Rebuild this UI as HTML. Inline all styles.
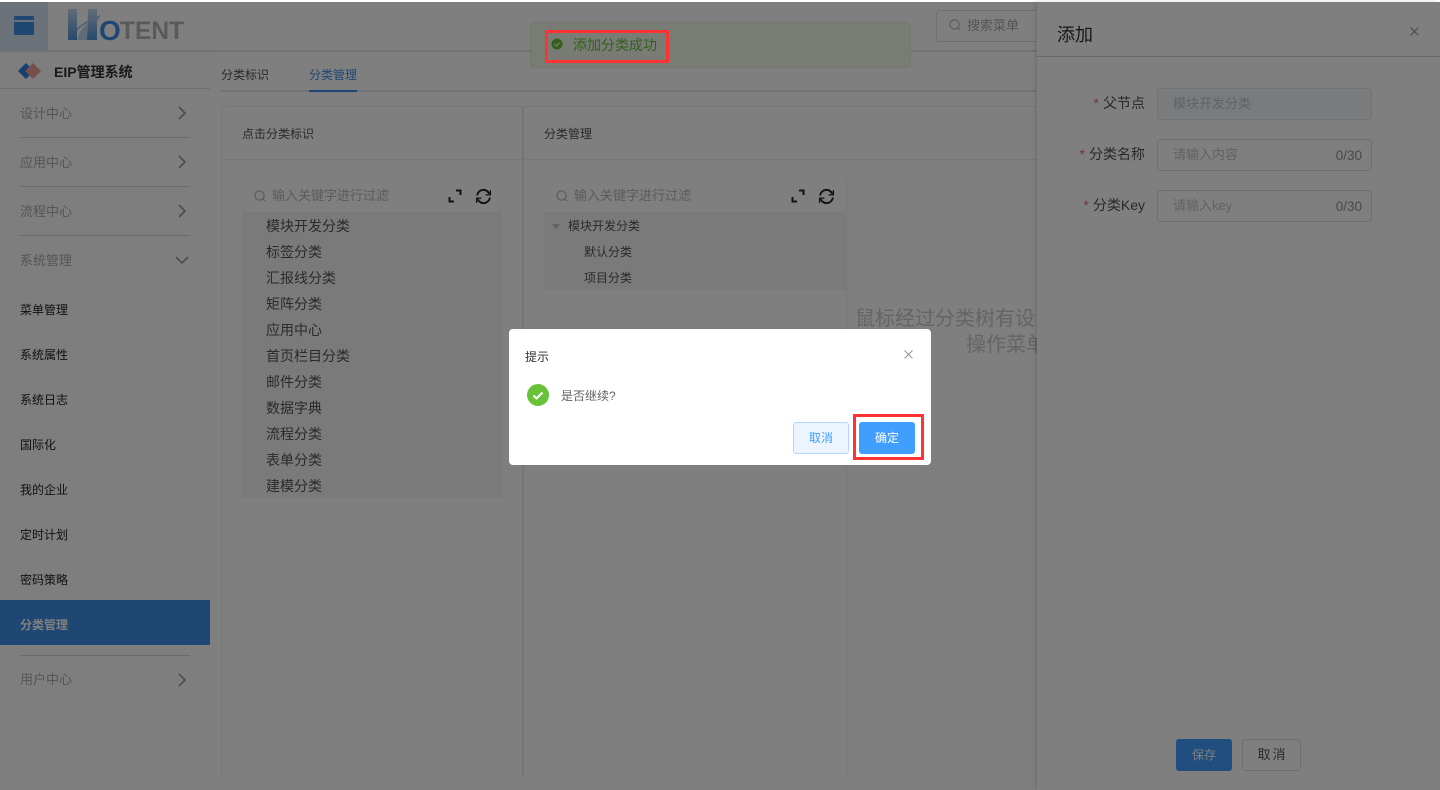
<!DOCTYPE html>
<html lang="zh-CN"><head><meta charset="utf-8"><title>分类管理</title>
<style>
html,body{margin:0;padding:0;width:1440px;height:790px;overflow:hidden;background:#fff}
*{box-sizing:border-box}
body{font-family:"Liberation Sans","Noto Sans CJK SC",sans-serif;font-size:12px;color:#333;position:relative}
.a{position:absolute;white-space:nowrap}
.l{position:absolute;background:#d4d6db}
#page{position:absolute;left:0;top:2px;width:1440px;height:788px;background:#fff}
.m{position:absolute;left:20px;font-size:13px;color:#aaa;line-height:20px}
.s{position:absolute;left:20px;font-size:12px;color:#222;line-height:20px}
.t{position:absolute;font-size:14px;line-height:20px;color:#555}
.t2{position:absolute;font-size:12px;line-height:20px;color:#555}
.ph{position:absolute;font-size:13px;line-height:20px;color:#b3b6bd}
.lab{position:absolute;font-size:14px;line-height:20px;color:#555;text-align:right;right:295px}
.lab i{color:#e66;font-style:normal;margin-right:4px}
.inp{position:absolute;left:1157px;width:215px;height:32px;border:1px solid #dcdfe6;border-radius:4px;background:#fff}
.cnt{position:absolute;right:9px;top:7px;font-size:13.5px;line-height:18px;color:#909399}
</style></head><body>
<div id="page"></div>

<!-- top bar -->
<div class="a" style="left:0;top:2px;width:48px;height:48px;background:#d8e4f4"></div>
<svg class="a" style="left:14px;top:16px" width="20" height="19" viewBox="0 0 20 19"><rect width="20" height="19" rx="1" fill="#3f8fe6"/><rect y="4" width="20" height="2" fill="#d8e4f4"/></svg>
<svg class="a" style="left:66px;top:8px" width="122" height="34" viewBox="0 0 122 34">
<defs><linearGradient id="g" x1="0" y1="0" x2="0" y2="1"><stop offset="0" stop-color="#c3d8ee"/><stop offset="1" stop-color="#4f93d6"/></linearGradient></defs>
<path d="M2 1H11V32H2Z" fill="url(#g)"/>
<path d="M11 32C13 25 16 20 21 16V32Z" fill="#a9c9ea" opacity=".75"/>
<path d="M22 1H31V32H21Z" fill="url(#g)"/>
<path d="M11 20C18 14 27 10 35 7L32 12C24 13 17 16 11 23Z" fill="#a6c6e8"/>
<text x="33" y="32" font-family="Liberation Sans,sans-serif" font-size="28" font-weight="700" fill="#3f8fe6">O</text>
<text x="54" y="31" font-family="Liberation Sans,sans-serif" font-size="25" font-weight="700" fill="#b5b5b5" textLength="64" lengthAdjust="spacingAndGlyphs">TENT</text>
</svg>
<div class="l" style="left:0;top:50px;width:1440px;height:2px;background:#e4e4e4"></div>
<div class="a" style="left:936px;top:10px;width:110px;height:32px;border:1px solid #dcdfe6;border-radius:4px"></div>
<svg class="a" style="left:948px;top:18px" width="14" height="14" viewBox="0 0 14 14" fill="none" stroke="#b3b6bd" stroke-width="1.2"><circle cx="6.5" cy="6.5" r="4.6"/><path d="M10 10l2 2"/></svg>
<div class="ph" style="left:967px;top:16px;color:#aaa">搜索菜单</div>

<!-- sidebar -->
<div class="a" style="left:0;top:52px;width:210px;height:738px;background:#fcfcfc"></div>
<svg class="a" style="left:18px;top:63px" width="24" height="16" viewBox="0 0 24 16"><path d="M8 0L16 8L8 16L0 8Z" fill="#2f7fe0"/><path d="M15 0L23 8L15 16L7 8Z" fill="#ee9d92"/></svg>
<div class="a" style="left:54px;top:62px;font-size:14px;font-weight:700;line-height:20px;color:#333">EIP管理系统</div>
<div class="l" style="left:0;top:88px;width:210px;height:1px;background:#e0e0e0"></div>

<div class="m" style="top:104px">设计中心</div><div class="l" style="left:20px;top:137px;width:170px;height:1px"></div>
<div class="m" style="top:153px">应用中心</div><div class="l" style="left:20px;top:186px;width:170px;height:1px"></div>
<div class="m" style="top:202px">流程中心</div><div class="l" style="left:20px;top:235px;width:170px;height:1px"></div>
<div class="m" style="top:251px">系统管理</div>
<svg class="a" style="left:176px;top:106px" width="12" height="14" viewBox="0 0 12 14" fill="none" stroke="#999" stroke-width="1.6"><path d="M3 1l6 6-6 6"/></svg>
<svg class="a" style="left:176px;top:155px" width="12" height="14" viewBox="0 0 12 14" fill="none" stroke="#999" stroke-width="1.6"><path d="M3 1l6 6-6 6"/></svg>
<svg class="a" style="left:176px;top:204px" width="12" height="14" viewBox="0 0 12 14" fill="none" stroke="#999" stroke-width="1.6"><path d="M3 1l6 6-6 6"/></svg>
<svg class="a" style="left:175px;top:255px" width="14" height="10" viewBox="0 0 14 10" fill="none" stroke="#999" stroke-width="1.6"><path d="M1 2l6 6 6-6"/></svg>
<div class="s" style="top:300px">菜单管理</div>
<div class="s" style="top:345px">系统属性</div>
<div class="s" style="top:390px">系统日志</div>
<div class="s" style="top:435px">国际化</div>
<div class="s" style="top:480px">我的企业</div>
<div class="s" style="top:525px">定时计划</div>
<div class="s" style="top:570px">密码策略</div>
<div class="a" style="left:0;top:600px;width:210px;height:45px;background:#3f8fe6"></div>
<div class="s" style="top:615px;color:#fff;font-weight:700">分类管理</div>
<div class="l" style="left:20px;top:655px;width:170px;height:1px"></div>
<div class="m" style="top:670px">用户中心</div>
<svg class="a" style="left:176px;top:673px" width="12" height="14" viewBox="0 0 12 14" fill="none" stroke="#999" stroke-width="1.6"><path d="M3 1l6 6-6 6"/></svg>

<!-- main -->
<div class="t2" style="left:221px;top:65px">分类标识</div>
<div class="t2" style="left:309px;top:65px;color:#3f8fe6">分类管理</div>
<div class="l" style="left:221px;top:90px;width:830px;height:2px;background:#e4e7ed"></div>
<div class="l" style="left:309px;top:90px;width:48px;height:2px;background:#3f8fe6"></div>

<div class="a" style="left:221px;top:106px;width:830px;height:670px;border:1px solid #ebeef5;border-bottom:0;border-radius:4px 0 0 0"></div>
<div class="l" style="left:522px;top:106px;width:2px;height:670px;background:#e8e8e8"></div>
<div class="l" style="left:846px;top:180px;width:1px;height:596px;background:#ebeef5"></div>
<div class="l" style="left:222px;top:159px;width:820px;height:1px;background:#ebeef5"></div>
<div class="t2" style="left:242px;top:124px">点击分类标识</div>
<div class="t2" style="left:544px;top:124px">分类管理</div>

<svg class="a" style="left:253px;top:189px" width="14" height="14" viewBox="0 0 14 14" fill="none" stroke="#b3b6bd" stroke-width="1.2"><circle cx="6.5" cy="6.5" r="4.6"/><path d="M10 10l2 2"/></svg>
<div class="ph" style="left:272px;top:186px">输入关键字进行过滤</div>
<svg class="a" style="left:448px;top:189px" width="14" height="14" viewBox="0 0 14 14" fill="none" stroke="#222" stroke-width="2"><path d="M1.500 8V12.500H6M8 1.500H12.500V6"/></svg>
<svg class="a" style="left:475px;top:188px" width="17" height="17" viewBox="0 0 16 16" fill="none" stroke="#222" stroke-width="1.8"><path d="M2 7A6 6 0 0 1 13.500 5.500M14 9A6 6 0 0 1 2.500 10.500"/><path d="M14.500 2v4.500H10M1.500 14V9.500H6" stroke-width="1.200"/></svg>
<div class="a" style="left:242px;top:212px;width:260px;height:286px;background:#f5f5f5"></div>
<div class="t" style="left:266px;top:216px">模块开发分类</div>
<div class="t" style="left:266px;top:242px">标签分类</div>
<div class="t" style="left:266px;top:268px">汇报线分类</div>
<div class="t" style="left:266px;top:294px">矩阵分类</div>
<div class="t" style="left:266px;top:320px">应用中心</div>
<div class="t" style="left:266px;top:346px">首页栏目分类</div>
<div class="t" style="left:266px;top:372px">邮件分类</div>
<div class="t" style="left:266px;top:398px">数据字典</div>
<div class="t" style="left:266px;top:424px">流程分类</div>
<div class="t" style="left:266px;top:450px">表单分类</div>
<div class="t" style="left:266px;top:476px">建模分类</div>

<svg class="a" style="left:555px;top:189px" width="14" height="14" viewBox="0 0 14 14" fill="none" stroke="#b3b6bd" stroke-width="1.2"><circle cx="6.5" cy="6.5" r="4.6"/><path d="M10 10l2 2"/></svg>
<div class="ph" style="left:574px;top:186px">输入关键字进行过滤</div>
<svg class="a" style="left:791px;top:189px" width="14" height="14" viewBox="0 0 14 14" fill="none" stroke="#222" stroke-width="2"><path d="M1.500 8V12.500H6M8 1.500H12.500V6"/></svg>
<svg class="a" style="left:818px;top:188px" width="17" height="17" viewBox="0 0 16 16" fill="none" stroke="#222" stroke-width="1.8"><path d="M2 7A6 6 0 0 1 13.500 5.500M14 9A6 6 0 0 1 2.500 10.500"/><path d="M14.500 2v4.500H10M1.500 14V9.500H6" stroke-width="1.200"/></svg>
<div class="a" style="left:544px;top:212px;width:302px;height:78px;background:#f5f5f5"></div>
<div class="a" style="left:552px;top:224px;width:0;height:0;border:4px solid transparent;border-top:5px solid #c0c4cc"></div>
<div class="t2" style="left:568px;top:216px">模块开发分类</div>
<div class="t2" style="left:584px;top:242px">默认分类</div>
<div class="t2" style="left:584px;top:268px">项目分类</div>

<div class="a" style="left:855px;top:306px;font-size:20px;line-height:26px;color:#c8c8c8">鼠标经过分类树有设置的节点</div>
<div class="a" style="left:966px;top:332px;font-size:20px;line-height:26px;color:#c8c8c8">操作菜单</div>

<!-- toast -->
<div class="a" style="left:530px;top:22px;width:381px;height:46px;background:#f0f9eb;border:1px solid #e1f3d8;border-radius:4px"></div>
<svg class="a" style="left:551px;top:38px" width="12" height="12" viewBox="0 0 12 12"><circle cx="6" cy="6" r="5.500" fill="#67c23a"/><path d="M3.500 6l2 2 3-3.500" fill="none" stroke="#f0f9eb" stroke-width="1.200"/></svg>
<div class="a" style="left:573px;top:35px;font-size:14px;line-height:20px;color:#67c23a">添加分类成功</div>

<!-- drawer -->
<div class="a" style="left:1037px;top:2px;width:403px;height:788px;background:#fff;box-shadow:-2px 0 4px rgba(0,0,0,.12)"></div>
<div class="a" style="left:1057px;top:23px;font-size:18px;line-height:25px;color:#303133">添加</div>
<svg class="a" style="left:1410px;top:27px" width="9" height="9" viewBox="0 0 9 9" stroke="#909399" fill="none"><path d="M.5.5l8 8M8.500.5l-8 8"/></svg>
<div class="l" style="left:1037px;top:56px;width:403px;height:1px;background:#cfd1d5"></div>
<div class="lab" style="top:93px"><i>*</i>父节点</div>
<div class="lab" style="top:144px"><i>*</i>分类名称</div>
<div class="lab" style="top:195px"><i>*</i>分类Key</div>
<div class="inp" style="top:88px;background:#f5f7fa;border-color:#e4e7ed"></div>
<div class="ph" style="left:1173px;top:94px;color:#c0c4cc">模块开发分类</div>
<div class="inp" style="top:139px"><span class="cnt">0/30</span></div>
<div class="ph" style="left:1173px;top:145px;color:#c0c4cc">请输入内容</div>
<div class="inp" style="top:190px"><span class="cnt">0/30</span></div>
<div class="ph" style="left:1173px;top:196px;color:#c0c4cc">请输入key</div>
<div class="a" style="left:1176px;top:739px;width:56px;height:32px;border-radius:3px;background:#409eff;color:#fff;text-align:center;line-height:32px;font-size:12px">保存</div>
<div class="a" style="left:1242px;top:739px;width:59px;height:32px;border-radius:3px;border:1px solid #dcdfe6;background:#fff;color:#555;text-align:center;line-height:30px;font-size:13px;letter-spacing:2px;padding-left:2px">取消</div>

<!-- overlay -->
<div class="a" style="left:0;top:2px;width:1440px;height:788px;background:rgba(0,0,0,.5)"></div>

<!-- dialog -->
<div class="a" style="left:509px;top:329px;width:422px;height:136px;background:#fff;border-radius:4px"></div>
<div class="a" style="left:525px;top:347px;font-size:12px;line-height:20px;color:#303133">提示</div>
<svg class="a" style="left:904px;top:350px" width="9" height="9" viewBox="0 0 9 9" stroke="#909399" fill="none"><path d="M.5.5l8 8M8.500.5l-8 8"/></svg>
<svg class="a" style="left:527px;top:384px" width="22" height="22" viewBox="0 0 22 22"><circle cx="11" cy="11" r="11" fill="#67c23a"/><path d="M6.500 11.500l3 3 6-6" fill="none" stroke="#fff" stroke-width="2"/></svg>
<div class="a" style="left:561px;top:386px;font-size:12px;line-height:20px;color:#606266">是否继续?</div>
<div class="a" style="left:793px;top:422px;width:56px;height:32px;border-radius:3px;background:#ecf5ff;border:1px solid #b3d8ff;color:#409eff;text-align:center;line-height:30px;font-size:12px">取消</div>
<div class="a" style="left:859px;top:422px;width:56px;height:32px;border-radius:3px;background:#409eff;color:#fff;text-align:center;line-height:32px;font-size:12px">确定</div>

<!-- annotations -->
<div class="a" style="left:545px;top:30px;width:124px;height:33px;border:3px solid #f33"></div>
<div class="a" style="left:853px;top:414px;width:71px;height:46px;border:3px solid #f33"></div>
</body></html>
